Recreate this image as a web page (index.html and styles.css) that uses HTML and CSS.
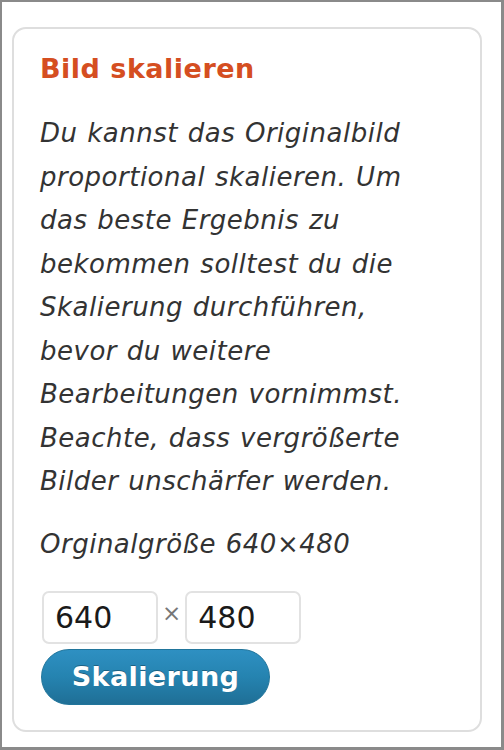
FILE: index.html
```html
<!DOCTYPE html>
<html lang="de">
<head>
<meta charset="utf-8">
<title>Bild skalieren</title>
<link rel="stylesheet" href="styles.css">
</head>
<body>
<div class="frame">
  <div class="card">
    <h3 class="title">Bild skalieren</h3>
    <p class="desc">Du kannst das Originalbild proportional skalieren. Um das beste Ergebnis zu bekommen solltest du die Skalierung durchführen, bevor du weitere Bearbeitungen vornimmst. Beachte, dass vergrößerte Bilder unschärfer werden.</p>
    <p class="desc orig">Orginalgröße 640×480</p>
    <div class="dims">
      <input class="num" type="text" value="640">
      <span class="times">×</span>
      <input class="num" type="text" value="480">
    </div>
    <button class="btn" type="button">Skalierung</button>
  </div>
</div>
</body>
</html>
```

FILE: styles.css
```css
html, body {
  margin: 0;
  padding: 0;
  background: #fff;
}
body {
  width: 504px;
  height: 750px;
  font-family: "DejaVu Sans", Verdana, sans-serif;
  color: #333;
}
.frame {
  box-sizing: border-box;
  width: 504px;
  height: 750px;
  border-style: solid;
  border-color: #8a8a8a;
  border-width: 2px 3px 3px 2px;
  padding: 25px 19px 15px 10px;
}
.card {
  box-sizing: border-box;
  height: 705px;
  border: 2px solid #dedede;
  border-radius: 14px;
  padding: 22px 20px 0 26px;
}
.title {
  margin: 0 0 25px;
  font-size: 27px;
  line-height: 36px;
  font-weight: bold;
  letter-spacing: 0.5px;
  color: #d54e21;
}
.desc {
  margin: 0;
  width: 395px;
  font-size: 26px;
  line-height: 43.5px;
  font-style: italic;
  letter-spacing: 0.5px;
  word-spacing: 1px;
  color: #333;
}
.orig {
  margin-top: 19.5px;
}
.dims {
  display: flex;
  align-items: center;
  gap: 4px;
  margin-top: 24px;
  margin-left: 2px;
}
.num {
  box-sizing: border-box;
  width: 116px;
  height: 53px;
  margin: 0;
  padding: 0 11px;
  border: 2px solid #e2e2e2;
  border-radius: 7px;
  font-family: "DejaVu Sans", Verdana, sans-serif;
  font-size: 30px;
  color: #1a1a1a;
  background: #fff;
  outline: none;
}
.times {
  font-size: 23px;
  color: #777;
  margin-top: -8px;
}
.btn {
  display: block;
  box-sizing: border-box;
  width: 229px;
  height: 56px;
  margin: 5px 0 0 1px;
  padding: 0;
  border: 1px solid #21759b;
  border-radius: 28px;
  background: linear-gradient(to bottom, #2e90c2 0%, #2583b0 50%, #1f6f96 100%);
  color: #fff;
  font-family: "DejaVu Sans", Verdana, sans-serif;
  font-size: 27px;
  font-weight: bold;
  letter-spacing: 0.4px;
  text-shadow: 0 -1px 0 rgba(0,0,0,0.3);
}
```
